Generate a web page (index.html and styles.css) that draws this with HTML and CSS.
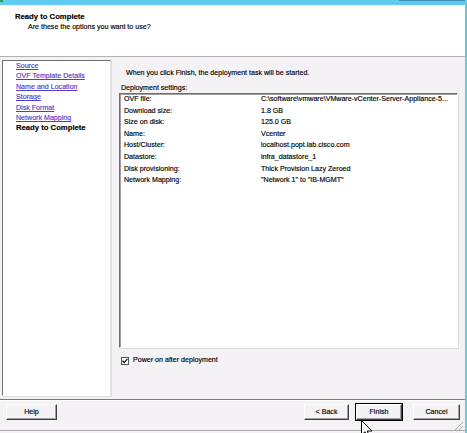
FILE: index.html
```html
<!DOCTYPE html>
<html>
<head>
<meta charset="utf-8">
<link rel="stylesheet" href="styles.css">
</head>
<body>
<div class="window">
  <div class="titlestrip"><span class="titlemark"></span><span class="closebtn"></span></div>
  <div class="header">
    <div class="h-title">Ready to Complete</div>
    <div class="h-sub">Are these the options you want to use?</div>
  </div>
  <div class="main">
    <div class="nav">
      <a class="link">Source</a>
      <a class="link">OVF Template Details</a>
      <a class="link">Name and Location</a>
      <a class="link">Storage</a>
      <a class="link">Disk Format</a>
      <a class="link">Network Mapping</a>
      <span class="current">Ready to Complete</span>
    </div>
    <div class="content">
      <div class="intro">When you click Finish, the deployment task will be started.</div>
      <div class="lbl">Deployment settings:</div>
      <div class="listbox">
        <div class="row"><span class="k">OVF file:</span><span>C:\software\vmware\VMware-vCenter-Server-Appliance-5...</span></div>
        <div class="row"><span class="k">Download size:</span><span>1.8 GB</span></div>
        <div class="row"><span class="k">Size on disk:</span><span>125.0 GB</span></div>
        <div class="row"><span class="k">Name:</span><span>Vcenter</span></div>
        <div class="row"><span class="k">Host/Cluster:</span><span>localhost.popt.lab.cisco.com</span></div>
        <div class="row"><span class="k">Datastore:</span><span>infra_datastore_1</span></div>
        <div class="row"><span class="k">Disk provisioning:</span><span>Thick Provision Lazy Zeroed</span></div>
        <div class="row"><span class="k">Network Mapping:</span><span>"Network 1" to "IB-MGMT"</span></div>
      </div>
      <div class="check">
        <span class="box"><svg width="6" height="6" viewBox="0 0 6 6"><path d="M0.6 2.6 L2.2 4.6 L5.4 0.8" fill="none" stroke="#000" stroke-width="1.2"/></svg></span>
        <span>Power on after deployment</span>
      </div>
    </div>
  </div>
  <div class="footer">
    <button class="btn help">Help</button>
    <div class="spacer"></div>
    <button class="btn back">&lt; Back</button>
    <button class="btn finish">Finish</button>
    <button class="btn cancel">Cancel</button>
  </div>
  <div class="grip"></div>
  <svg class="cursor" width="12" height="19" viewBox="0 0 12 19"><path d="M0.5 0.5 L0.5 15 L4 11.8 L6.5 17.5 L8.6 16.6 L6.2 11 L10.8 11 Z" fill="#fff" stroke="#000" stroke-width="1"/></svg>
</div>
</body>
</html>
```
FILE: styles.css
```css
html, body { margin: 0; padding: 0; }
body {
  font-family: "Liberation Sans", Arial, sans-serif;
  font-size: 7.1px;
  color: #000;
  background: #fff;
  -webkit-text-stroke: 0.15px currentColor;
}
.window {
  position: relative;
  width: 467px;
  height: 433px;
  background: #f5f2f5;
  box-sizing: border-box;
  border-right: 2px solid #5fc9ef;
  overflow: hidden;
  display: flex;
  flex-direction: column;
}
.titlestrip {
  height: 5px;
  background: #61caf0;
  position: relative;
  overflow: hidden;
  flex: none;
}
.titlemark {
  position: absolute;
  left: 0;
  top: 0;
  width: 3px;
  height: 2px;
  background: #3a9a4a;
}
.closebtn {
  position: absolute;
  right: 0;
  top: -10px;
  width: 66px;
  height: 11px;
  background: #3e8fb2;
}
.header {
  height: 52px;
  background: #fff;
  border-bottom: 1px solid #b4aeb4;
  box-sizing: border-box;
  padding: 6px 0 0 15px;
  flex: none;
}
.h-title { font-weight: bold; font-size: 7.7px; line-height: 11px; }
.h-sub { padding-left: 13px; line-height: 11px; }
.main {
  display: flex;
  padding: 3px 7px 0 2px;
  height: 342px;
  box-sizing: border-box;
  flex: none;
}
.nav {
  width: 109px;
  height: 336px;
  background: #fff;
  box-sizing: border-box;
  border-top: 1px solid #6e6e6e;
  border-left: 1px solid #6e6e6e;
  border-right: 1px solid #e4e4e4;
  border-bottom: 1px solid #ffffff;
  box-shadow: 1px 1px 0 #dcdcdc;
  padding: 0 0 0 13px;
  display: flex;
  flex-direction: column;
  flex: none;
}
.link {
  color: #5838c8;
  text-decoration: underline;
  line-height: 10.4px;
}
.current {
  font-weight: bold;
  font-size: 7.7px;
  line-height: 10.4px;
}
.content {
  margin-left: 8px;
  width: 339px;
  display: flex;
  flex-direction: column;
}
.intro { padding: 8px 0 0 7px; line-height: 11px; }
.lbl { margin-top: 5px; padding-left: 2px; line-height: 9px; }
.listbox {
  height: 255px;
  background: #fff;
  box-sizing: border-box;
  border-top: 1px solid #6e6e6e;
  border-left: 1px solid #6e6e6e;
  border-right: 1px solid #fff;
  border-bottom: 1px solid #fff;
  box-shadow: 1px 1px 0 #dcdcdc, inset 1px 1px 0 #a0a0a0;
  padding: 0 0 0 4px;
}
.row {
  display: flex;
  line-height: 11.6px;
  white-space: nowrap;
}
.k { width: 137px; flex: none; }
.check {
  display: flex;
  align-items: center;
  gap: 4px;
  margin-top: 7px;
  padding-left: 2px;
  line-height: 11px;
}
.box {
  width: 8px;
  height: 8px;
  background: #fff;
  box-sizing: border-box;
  border: 1px solid #555;
  display: flex;
  align-items: center;
  justify-content: center;
}
.box svg { display: block; }
.footer {
  border-top: 1px solid #7a7a7a;
  box-shadow: inset 0 1px 0 #fff;
  padding: 4px 5px 0 6px;
  display: flex;
  height: 32px;
  box-sizing: border-box;
  border-bottom: 1px solid #aaa6aa;
  flex: none;
}
.spacer { flex: 1; }
.btn {
  font-family: "Liberation Sans", Arial, sans-serif;
  font-size: 7.1px;
  -webkit-text-stroke: 0.15px currentColor;
  height: 16px;
  padding: 0;
  background: #f5f2f5;
  box-sizing: border-box;
  border-top: 1px solid #fff;
  border-left: 1px solid #fff;
  border-right: 1px solid #404040;
  border-bottom: 1px solid #404040;
  box-shadow: inset -1px -1px 0 #a0a0a0;
  color: #000;
}
.help { width: 51px; }
.back { width: 45px; }
.finish {
  width: 46px;
  margin-left: 7px;
  outline: 1px solid #000;
}
.cancel { width: 47px; margin-left: 11px; }
.grip {
  position: absolute;
  right: 2px;
  bottom: 3px;
  width: 8px;
  height: 8px;
  background: linear-gradient(135deg, transparent 45%, #aaa 45%, #aaa 55%, transparent 55%, transparent 70%, #aaa 70%, #aaa 80%, transparent 80%);
}
.cursor {
  position: absolute;
  left: 361px;
  top: 420px;
}
```
